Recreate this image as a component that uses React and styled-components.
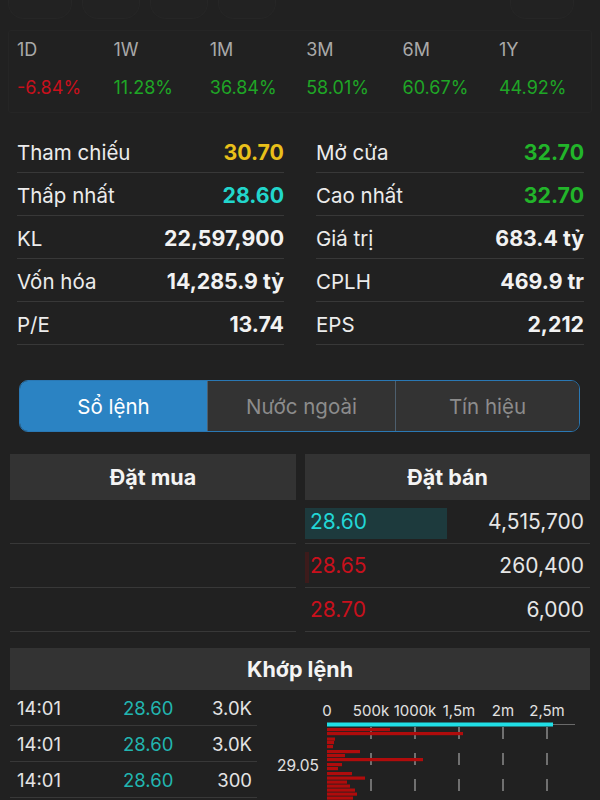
import React from 'react';
import styled, { createGlobalStyle } from 'styled-components';

const Global = createGlobalStyle`
  html, body { margin: 0; padding: 0; background: #212121; }
  body { font-family: Inter, "Noto Sans", sans-serif; color: #ececec; -webkit-font-smoothing: antialiased; }
`;

const Page = styled.div`
  width: 600px;
  height: 800px;
  overflow: hidden;
  background: #212121;
  display: flex;
  flex-direction: column;
`;

const TopStrip = styled.div`
  height: 30px;
  display: flex;
  align-items: flex-start;
  padding: 0 8px;
  gap: 10px;
`;

const GhostPill = styled.div`
  width: ${p => p.$w}px;
  margin-left: ${p => p.$ml || 0}px;
  height: 18px;
  border: 1px solid #262626;
  border-top: none;
  border-radius: 0 0 16px 16px;
  background: #222222;
`;

const PeriodBox = styled.div`
  margin: 0 8px;
  height: 83px;
  box-sizing: border-box;
  border: 1px solid #252525;
  border-radius: 3px;
  padding: 7px 0 0 8px;
  display: grid;
  grid-template-columns: repeat(6, 96.4px);
  align-content: start;
`;

const Period = styled.div`
  display: flex;
  flex-direction: column;
  gap: 15px;
`;

const PeriodLabel = styled.div`
  font-size: 18px;
  line-height: 23px;
  color: #a9a9a9;
`;

const PeriodValue = styled.div`
  font-size: 18px;
  line-height: 23px;
  color: ${p => p.$c};
`;

const Stats = styled.div`
  margin-top: 17px;
  padding: 0 16px 0 17px;
  display: grid;
  grid-template-columns: 267px 268px;
  column-gap: 32px;
`;

const StatCol = styled.div`
  display: flex;
  flex-direction: column;
`;

const StatRow = styled.div`
  height: 40px;
  padding-top: 2px;
  border-bottom: 1px solid #383838;
  display: flex;
  align-items: center;
  justify-content: space-between;
`;

const StatLabel = styled.span`
  font-size: 20.5px;
  color: #ececec;
`;

const StatValue = styled.span`
  font-size: 21.3px;
  font-weight: 700;
  color: ${p => p.$c || '#f2f2f2'};
`;

const Tabs = styled.div`
  margin: 35px 0 0 19px;
  width: 561px;
  height: 52px;
  box-sizing: border-box;
  border: 1.5px solid #2a78b4;
  border-radius: 9px;
  overflow: hidden;
  display: grid;
  grid-template-columns: 187px 188px 1fr;
`;

const Tab = styled.div`
  display: flex;
  align-items: center;
  justify-content: center;
  font-size: 20.5px;
  background: ${p => (p.$active ? '#2b83c3' : '#333333')};
  color: ${p => (p.$active ? '#ffffff' : '#8c8c8c')};
  border-left: ${p => (p.$first ? 'none' : '1px solid #4d5f6e')};
`;

const Book = styled.div`
  margin-top: 22px;
  padding: 0 10px;
  display: grid;
  grid-template-columns: 286px 285px;
  column-gap: 9px;
`;

const BookCol = styled.div`
  display: flex;
  flex-direction: column;
`;

const Header = styled.div`
  height: ${p => p.$h || 46}px;
  background: #333333;
  display: flex;
  align-items: center;
  justify-content: center;
  font-size: 21.5px;
  font-weight: 700;
  color: #f4f4f4;
`;

const BookRow = styled.div`
  position: relative;
  height: 43px;
  border-bottom: 1px solid #383838;
  display: flex;
  align-items: center;
  justify-content: space-between;
  padding: 0 6px 0 5px;
`;

const DepthBar = styled.div`
  position: absolute;
  left: 0;
  top: 8px;
  bottom: 4px;
  background: ${p => p.$c};
`;

const BookPrice = styled.span`
  position: relative;
  font-size: 21px;
  color: ${p => p.$c};
`;

const BookVol = styled.span`
  position: relative;
  font-size: 21px;
  color: #e6e6e6;
`;

const MatchHeader = styled(Header)`
  margin: 16px 10px 0;
`;

const Trades = styled.div`
  display: flex;
  gap: 13px;
  padding-left: 10px;
`;

const TradeTable = styled.div`
  width: 247px;
  display: flex;
  flex-direction: column;
`;

const TradeRow = styled.div`
  height: 35px;
  border-bottom: 1px solid #383838;
  display: grid;
  grid-template-columns: 106px 60px 1fr;
  align-items: center;
  padding: 0 5px 0 7px;
  font-size: 18.5px;
`;

const TradeTime = styled.span`
  color: #e4e4e4;
`;

const TradePrice = styled.span`
  color: #22b5b0;
`;

const TradeVol = styled.span`
  color: #e4e4e4;
  text-align: right;
`;

const periods = [
  ['1D', '-6.84%', '#c8101c'],
  ['1W', '11.28%', '#1fa626'],
  ['1M', '36.84%', '#1fa626'],
  ['3M', '58.01%', '#1fa626'],
  ['6M', '60.67%', '#1fa626'],
  ['1Y', '44.92%', '#1fa626'],
];

const leftStats = [
  ['Tham chiếu', '30.70', '#e9c01a'],
  ['Thấp nhất', '28.60', '#22d6cc'],
  ['KL', '22,597,900'],
  ['Vốn hóa', '14,285.9 tỷ'],
  ['P/E', '13.74'],
];

const rightStats = [
  ['Mở cửa', '32.70', '#22b52a'],
  ['Cao nhất', '32.70', '#22b52a'],
  ['Giá trị', '683.4 tỷ'],
  ['CPLH', '469.9 tr'],
  ['EPS', '2,212'],
];

const asks = [
  { p: '28.60', v: '4,515,700', c: '#22d6d6', bar: 142, bc: '#1d3a3d' },
  { p: '28.65', v: '260,400', c: '#c8101c', bar: 4, bc: '#3d1b1b' },
  { p: '28.70', v: '6,000', c: '#c8101c', bar: 0, bc: 'transparent' },
];

const trades = [
  ['14:01', '28.60', '3.0K'],
  ['14:01', '28.60', '3.0K'],
  ['14:01', '28.60', '300'],
];

const redBars = [
  [728, 390], [732, 463], [737.5, 335], [741, 334], [745, 333], [750, 360],
  [754, 345], [758, 423], [763, 342], [767, 338], [772, 352], [776.5, 365],
  [780.5, 347], [784.5, 350], [788.5, 355], [792.5, 357], [796.5, 353],
];

function VolumeChart() {
  const ox = 270;
  const oy = 690;
  const x0 = 327 - ox;
  const ticks = [
    ['0', 327], ['500k', 371], ['1000k', 415], ['1,5m', 459], ['2m', 503], ['2,5m', 547],
  ];
  return (
    <svg width="330" height="110" viewBox="0 0 330 110">
      {ticks.map(([t, x]) => (
        <text key={t} x={x - ox} y={26} textAnchor="middle" fontSize="15" fill="#e2e2e2" fontFamily="Inter, sans-serif">{t}</text>
      ))}
      {[371, 415, 459, 503, 547].map(x => (
        <line key={x} x1={x - ox} x2={x - ox} y1={37} y2={110} stroke="#8a8a8a" strokeWidth="1.5" strokeDasharray="12 14" />
      ))}
      <line x1={x0} x2={575 - ox} y1={34.5} y2={34.5} stroke="#6a6a6a" strokeWidth="1" />
      <rect x={x0} y={32.5} width={553 - 327} height={4} fill="#20dfe6" />
      {redBars.map(([y, x2], i) => (
        <rect key={i} x={x0} y={y - oy} width={x2 - 327} height={3.2} fill="#b00c0c" />
      ))}
      <text x={298 - ox} y={81} textAnchor="middle" fontSize="15.5" fill="#e2e2e2" fontFamily="Inter, sans-serif">29.05</text>
    </svg>
  );
}

export default function App() {
  return (
    <Page>
      <Global />
      <TopStrip>
        <GhostPill $w={62} />
        <GhostPill $w={56} />
        <GhostPill $w={56} />
        <GhostPill $w={56} />
        <GhostPill $w={62} $ml={224} />
      </TopStrip>
      <PeriodBox>
        {periods.map(([l, v, c]) => (
          <Period key={l}>
            <PeriodLabel>{l}</PeriodLabel>
            <PeriodValue $c={c}>{v}</PeriodValue>
          </Period>
        ))}
      </PeriodBox>
      <Stats>
        {[leftStats, rightStats].map((col, ci) => (
          <StatCol key={ci}>
            {col.map(([l, v, c]) => (
              <StatRow key={l}>
                <StatLabel>{l}</StatLabel>
                <StatValue $c={c}>{v}</StatValue>
              </StatRow>
            ))}
          </StatCol>
        ))}
      </Stats>
      <Tabs>
        <Tab $active $first>Sổ lệnh</Tab>
        <Tab>Nước ngoài</Tab>
        <Tab>Tín hiệu</Tab>
      </Tabs>
      <Book>
        <BookCol>
          <Header>Đặt mua</Header>
          <BookRow />
          <BookRow />
          <BookRow />
        </BookCol>
        <BookCol>
          <Header>Đặt bán</Header>
          {asks.map(a => (
            <BookRow key={a.p}>
              <DepthBar $c={a.bc} style={{ width: a.bar }} />
              <BookPrice $c={a.c}>{a.p}</BookPrice>
              <BookVol>{a.v}</BookVol>
            </BookRow>
          ))}
        </BookCol>
      </Book>
      <MatchHeader $h={42}>Khớp lệnh</MatchHeader>
      <Trades>
        <TradeTable>
          {trades.map(([t, p, v], i) => (
            <TradeRow key={i}>
              <TradeTime>{t}</TradeTime>
              <TradePrice>{p}</TradePrice>
              <TradeVol>{v}</TradeVol>
            </TradeRow>
          ))}
        </TradeTable>
        <VolumeChart />
      </Trades>
    </Page>
  );
}
